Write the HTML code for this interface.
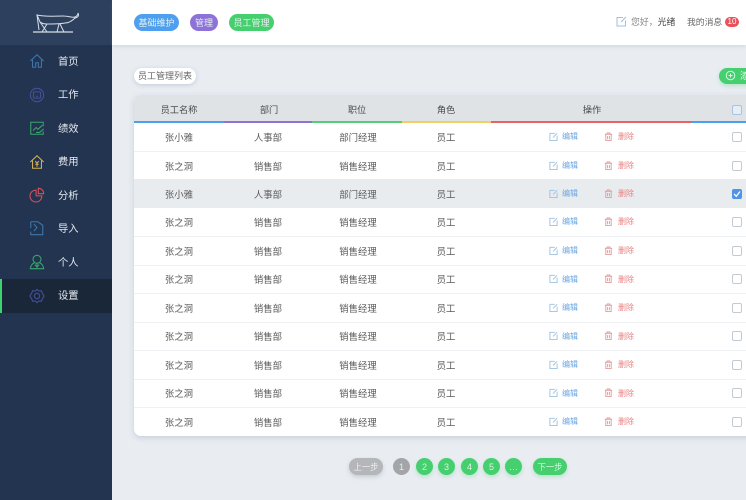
<!DOCTYPE html>
<html><head><meta charset="utf-8"><style>
*{margin:0;padding:0;box-sizing:border-box}
html,body{width:746px;height:500px;overflow:hidden}
body{position:relative;background:#e9edf2;font-family:"Liberation Sans","Noto Sans CJK SC",sans-serif;font-size:10px;color:#555;filter:blur(.3px)}
.a{position:absolute}
.t{position:absolute;white-space:nowrap;line-height:14px}
#side{left:0;top:0;width:112px;height:500px;background:#22344f}
#logo{left:0;top:0;width:112px;height:45px;background:#2d405e}
.mi{position:absolute;left:58px;color:#e6eaef;font-size:10.3px;line-height:14px;white-space:nowrap}
.ic{position:absolute;left:29px;width:16px;height:16px;fill:none;stroke-width:1.2}
#top{left:112px;top:0;width:634px;height:45px;background:#fff;box-shadow:0 1px 4px rgba(120,140,160,.25)}
.pill{position:absolute;top:14px;height:17px;border-radius:9px;color:#e8f2ee;font-size:9px;line-height:19px;text-align:center}
#tb{left:134px;top:95px;width:640px;height:341px;background:#fff;border-radius:7px;box-shadow:0 2px 6px rgba(120,140,160,.3);overflow:hidden}
#hd{left:134px;top:95px;width:612px;height:26px;background:#e0e3e6;border-radius:7px 0 0 0}
.b{position:absolute;top:121px;height:2px}
.h{position:absolute;top:102.5px;font-size:9.2px;line-height:14px;color:#4a4a4a;transform:translateX(-50%);white-space:nowrap}
.l{position:absolute;left:134px;width:612px;height:1px;background:#eef0f3}
.r{position:absolute;left:0;width:746px;height:0}
.c{position:absolute;top:-6.5px;font-size:9.4px;line-height:14px;color:#5a5a5a;transform:translateX(-50%);white-space:nowrap}
.c1{left:179px}.c2{left:268px}.c3{left:358px}.c4{left:446px}
.e{position:absolute;top:-6px;left:562px;font-size:8px;line-height:12px;color:#6aa5e0}
.d{position:absolute;top:-6px;left:618px;font-size:8px;line-height:12px;color:#e98080}
.ei,.di{position:absolute;top:-5.5px;width:9px;height:9px;fill:none;stroke-width:1}
.ei{left:549px;stroke:#9cc0e0}.di{left:604px;stroke:#e59a9a}
.cb{position:absolute;top:-5.5px;left:732px;width:10px;height:10px;border:1px solid #c2cad3;border-radius:2px;background:#fff}
.pg{position:absolute;top:458px;width:17px;height:17px;border-radius:50%;background:#45cf6e;color:#d8f5e2;font-size:9px;line-height:18px;text-align:center;box-shadow:0 2px 4px rgba(70,200,110,.3)}
</style></head><body>
<div class="a" id="side"></div>
<div class="a" id="logo"></div>
<svg class="a" style="left:30px;top:10px" width="52" height="24" fill="none" stroke="#d8dee6" stroke-width="1"><path d="M7 5C15 7 25 6 33 6C38 6 43 8 45 7C47 6 48 5 48 3C49 5 49 7 45 8C42 11 38 13 35 13C30 14 25 14 17 14C14 14 11 13 10 12Z"/><path d="M7 5L9 20M10 12L17 22M17 14L12 22M29 14L27 22M30 14L34 22"/><path d="M3 22H43" stroke-width="1.3"/></svg>
<div class="a" style="left:0;top:279px;width:112px;height:34px;background:#1a2739"></div>
<div class="a" style="left:0;top:279px;width:2px;height:34px;background:#3fd070"></div>
<svg class="ic" style="top:53px;stroke:#3d77ad" viewBox="0 0 18 18"><path d="M1.500 9L9 2L16.500 9M4 7.500V16H7.500V11H10.500V16H14V7.500"/></svg>
<svg class="ic" style="top:87px;stroke:#45509a" viewBox="0 0 18 18"><circle cx="9" cy="9" r="7.500"/><path d="M6 5.500H12Q13 5.500 13 6.500V11.500Q13 12.500 12 12.500H6Q5 12.500 5 11.500V6.500Q5 5.500 6 5.500ZM8 10.500H10"/></svg>
<svg class="ic" style="top:120px;stroke:#3aa56b" viewBox="0 0 18 18"><path d="M16 7V2.500H2V16H16V13"/><path d="M4.500 12L8 8.500L10 10.500L15 6M8 14L12 14L16.500 10"/></svg>
<svg class="ic" style="top:154px;stroke:#d4b057" viewBox="0 0 18 18"><path d="M1.500 9L9 2L16.500 9M4 7.500V16H14V7.500"/><path d="M7 8L9 10.500L11 8M9 10.500V14.500M7 11.500H11"/></svg>
<svg class="ic" style="top:187px;stroke:#d6515b" viewBox="0 0 18 18"><path d="M8 3.500A6.700 6.700 0 1 0 14.500 10H8Z"/><path d="M10.500 1.500A6 6 0 0 1 16.500 7.500H10.500Z"/></svg>
<svg class="ic" style="top:220px;stroke:#3d77ad" viewBox="0 0 18 18"><path d="M2 2H10L15.500 6V16.500H2V13"/><path d="M2 2V9M5.500 4.500L9 8.500L5.500 12.500"/></svg>
<svg class="ic" style="top:254px;stroke:#3aa56b" viewBox="0 0 18 18"><circle cx="9" cy="6" r="4.500"/><path d="M6 10C3.500 11 2 13 1.500 16.500H16.500C16 13 14.500 11 12 10M9 11V16.500M6.500 12L9 14.500L11.500 12"/></svg>
<svg class="ic" style="top:288px;stroke:#45509a" viewBox="0 0 18 18"><path d="M9 1.500L11 3.500L14 3L15 6L17 9L15 12L14 15L11 14.500L9 16.500L7 14.500L4 15L3 12L1 9L3 6L4 3L7 3.500Z"/><circle cx="9" cy="9" r="3"/></svg>
<div class="mi" style="top:55.500px">首页</div>
<div class="mi" style="top:89px">工作</div>
<div class="mi" style="top:122.500px">绩效</div>
<div class="mi" style="top:156px">费用</div>
<div class="mi" style="top:189.500px">分析</div>
<div class="mi" style="top:223px">导入</div>
<div class="mi" style="top:256.500px">个人</div>
<div class="mi" style="top:290px">设置</div>

<div class="a" id="top"></div>
<div class="pill" style="left:134px;width:45px;background:#4f9ff0">基础维护</div>
<div class="pill" style="left:190px;width:28px;background:#8d72d8">管理</div>
<div class="pill" style="left:229px;width:45px;background:#45cf6e">员工管理</div>
<svg class="a" style="left:616px;top:16px;fill:none;stroke:#9cc0e0;stroke-width:1" width="11" height="11"><path d="M7 1.500H1V10H9.500V4.500M5 6L10 1"/></svg>
<div class="t" style="left:631px;top:15px;font-size:8.900px;color:#888">您好，<span style="color:#444">光绪</span></div>
<div class="t" style="left:687px;top:15px;font-size:8.800px;color:#666">我的消息</div>
<div class="a" style="left:725px;top:17px;width:14px;height:9.500px;border-radius:5px;background:#e8525a;color:#fff;font-size:8px;line-height:10px;text-align:center">10</div>

<div class="a" style="left:134px;top:68px;width:62px;height:16px;border-radius:8px;background:#fff;box-shadow:0 1px 4px rgba(120,140,160,.35);font-size:9px;line-height:17px;text-align:center;color:#666">员工管理列表</div>
<div class="a" style="left:719px;top:68px;width:40px;height:16px;border-radius:8px;background:#45cf6e;box-shadow:0 2px 4px rgba(70,200,110,.3)"></div>
<svg class="a" style="left:725px;top:70px;fill:none;stroke:#d8f5e2;stroke-width:1" width="11" height="11"><circle cx="5.500" cy="5.500" r="4.300"/><path d="M5.500 3.500V7.500M3.500 5.500H7.500"/></svg>
<div class="t" style="left:740px;top:69px;font-size:9px;color:#e8f8ee">添</div>

<div class="a" id="tb"></div>
<div class="a" id="hd"></div>
<div class="b" style="left:134px;width:90px;background:#4f9ff0"></div>
<div class="b" style="left:224px;width:88px;background:#8d72d8"></div>
<div class="b" style="left:312px;width:90px;background:#53cf7a"></div>
<div class="b" style="left:402px;width:89px;background:#f0cf63"></div>
<div class="b" style="left:491px;width:201px;background:#e8606a"></div>
<div class="b" style="left:692px;width:54px;background:#4f9ff0"></div>
<div class="h" style="left:179px">员工名称</div>
<div class="h" style="left:269px">部门</div>
<div class="h" style="left:357px">职位</div>
<div class="h" style="left:446px">角色</div>
<div class="h" style="left:592px">操作</div>
<div class="cb" style="top:105px;background:#e6edf4;border-color:#a9c4de"></div>

<div class="a" style="left:134px;top:179px;width:612px;height:29px;background:#e9ecef"></div>
<div class="l" style="top:151px"></div><div class="l" style="top:236px"></div><div class="l" style="top:265px"></div><div class="l" style="top:293px"></div><div class="l" style="top:322px"></div><div class="l" style="top:350px"></div><div class="l" style="top:379px"></div><div class="l" style="top:407px"></div>

<div class="r" style="top:137px"><div class="c c1">张小雅</div><div class="c c2">人事部</div><div class="c c3">部门经理</div><div class="c c4">员工</div><svg class="ei" viewBox="0 0 10 10"><path d="M6.500 1.500H1V9.500H9V4M4.500 6L9 1.500"/></svg><div class="e">编辑</div><svg class="di" viewBox="0 0 10 10"><path d="M1 2.500H9M3.500 2.500V1H6.500V2.500M2 2.500V9.500H8V2.500M4 4.500V8M6 4.500V8"/></svg><div class="d">删除</div><div class="cb"></div></div>
<div class="r" style="top:166px"><div class="c c1">张之洞</div><div class="c c2">销售部</div><div class="c c3">销售经理</div><div class="c c4">员工</div><svg class="ei" viewBox="0 0 10 10"><path d="M6.500 1.500H1V9.500H9V4M4.500 6L9 1.500"/></svg><div class="e">编辑</div><svg class="di" viewBox="0 0 10 10"><path d="M1 2.500H9M3.500 2.500V1H6.500V2.500M2 2.500V9.500H8V2.500M4 4.500V8M6 4.500V8"/></svg><div class="d">删除</div><div class="cb"></div></div>
<div class="r" style="top:194px"><div class="c c1">张小雅</div><div class="c c2">人事部</div><div class="c c3">部门经理</div><div class="c c4">员工</div><svg class="ei" viewBox="0 0 10 10"><path d="M6.500 1.500H1V9.500H9V4M4.500 6L9 1.500"/></svg><div class="e">编辑</div><svg class="di" viewBox="0 0 10 10"><path d="M1 2.500H9M3.500 2.500V1H6.500V2.500M2 2.500V9.500H8V2.500M4 4.500V8M6 4.500V8"/></svg><div class="d">删除</div><div class="cb" style="background:#4f94e6;border-color:#4f94e6"></div><svg class="a" style="left:733px;top:-4.500px;fill:none;stroke:#fff;stroke-width:1.300" width="8" height="8"><path d="M1 4L3.300 6.300L7 1.500"/></svg></div>
<div class="r" style="top:222px"><div class="c c1">张之洞</div><div class="c c2">销售部</div><div class="c c3">销售经理</div><div class="c c4">员工</div><svg class="ei" viewBox="0 0 10 10"><path d="M6.500 1.500H1V9.500H9V4M4.500 6L9 1.500"/></svg><div class="e">编辑</div><svg class="di" viewBox="0 0 10 10"><path d="M1 2.500H9M3.500 2.500V1H6.500V2.500M2 2.500V9.500H8V2.500M4 4.500V8M6 4.500V8"/></svg><div class="d">删除</div><div class="cb"></div></div>
<div class="r" style="top:251px"><div class="c c1">张之洞</div><div class="c c2">销售部</div><div class="c c3">销售经理</div><div class="c c4">员工</div><svg class="ei" viewBox="0 0 10 10"><path d="M6.500 1.500H1V9.500H9V4M4.500 6L9 1.500"/></svg><div class="e">编辑</div><svg class="di" viewBox="0 0 10 10"><path d="M1 2.500H9M3.500 2.500V1H6.500V2.500M2 2.500V9.500H8V2.500M4 4.500V8M6 4.500V8"/></svg><div class="d">删除</div><div class="cb"></div></div>
<div class="r" style="top:279.500px"><div class="c c1">张之洞</div><div class="c c2">销售部</div><div class="c c3">销售经理</div><div class="c c4">员工</div><svg class="ei" viewBox="0 0 10 10"><path d="M6.500 1.500H1V9.500H9V4M4.500 6L9 1.500"/></svg><div class="e">编辑</div><svg class="di" viewBox="0 0 10 10"><path d="M1 2.500H9M3.500 2.500V1H6.500V2.500M2 2.500V9.500H8V2.500M4 4.500V8M6 4.500V8"/></svg><div class="d">删除</div><div class="cb"></div></div>
<div class="r" style="top:308px"><div class="c c1">张之洞</div><div class="c c2">销售部</div><div class="c c3">销售经理</div><div class="c c4">员工</div><svg class="ei" viewBox="0 0 10 10"><path d="M6.500 1.500H1V9.500H9V4M4.500 6L9 1.500"/></svg><div class="e">编辑</div><svg class="di" viewBox="0 0 10 10"><path d="M1 2.500H9M3.500 2.500V1H6.500V2.500M2 2.500V9.500H8V2.500M4 4.500V8M6 4.500V8"/></svg><div class="d">删除</div><div class="cb"></div></div>
<div class="r" style="top:336.500px"><div class="c c1">张之洞</div><div class="c c2">销售部</div><div class="c c3">销售经理</div><div class="c c4">员工</div><svg class="ei" viewBox="0 0 10 10"><path d="M6.500 1.500H1V9.500H9V4M4.500 6L9 1.500"/></svg><div class="e">编辑</div><svg class="di" viewBox="0 0 10 10"><path d="M1 2.500H9M3.500 2.500V1H6.500V2.500M2 2.500V9.500H8V2.500M4 4.500V8M6 4.500V8"/></svg><div class="d">删除</div><div class="cb"></div></div>
<div class="r" style="top:365px"><div class="c c1">张之洞</div><div class="c c2">销售部</div><div class="c c3">销售经理</div><div class="c c4">员工</div><svg class="ei" viewBox="0 0 10 10"><path d="M6.500 1.500H1V9.500H9V4M4.500 6L9 1.500"/></svg><div class="e">编辑</div><svg class="di" viewBox="0 0 10 10"><path d="M1 2.500H9M3.500 2.500V1H6.500V2.500M2 2.500V9.500H8V2.500M4 4.500V8M6 4.500V8"/></svg><div class="d">删除</div><div class="cb"></div></div>
<div class="r" style="top:393.500px"><div class="c c1">张之洞</div><div class="c c2">销售部</div><div class="c c3">销售经理</div><div class="c c4">员工</div><svg class="ei" viewBox="0 0 10 10"><path d="M6.500 1.500H1V9.500H9V4M4.500 6L9 1.500"/></svg><div class="e">编辑</div><svg class="di" viewBox="0 0 10 10"><path d="M1 2.500H9M3.500 2.500V1H6.500V2.500M2 2.500V9.500H8V2.500M4 4.500V8M6 4.500V8"/></svg><div class="d">删除</div><div class="cb"></div></div>
<div class="r" style="top:422px"><div class="c c1">张之洞</div><div class="c c2">销售部</div><div class="c c3">销售经理</div><div class="c c4">员工</div><svg class="ei" viewBox="0 0 10 10"><path d="M6.500 1.500H1V9.500H9V4M4.500 6L9 1.500"/></svg><div class="e">编辑</div><svg class="di" viewBox="0 0 10 10"><path d="M1 2.500H9M3.500 2.500V1H6.500V2.500M2 2.500V9.500H8V2.500M4 4.500V8M6 4.500V8"/></svg><div class="d">删除</div><div class="cb"></div></div>

<div class="a" style="left:349px;top:458px;width:34px;height:17px;border-radius:9px;background:#b4b6b9;color:#eee;font-size:8.300px;line-height:18px;text-align:center;box-shadow:0 2px 4px rgba(120,130,150,.3)">上一步</div>
<div class="pg" style="left:393px;background:#a3a5a9;box-shadow:none">1</div>
<div class="pg" style="left:416px">2</div>
<div class="pg" style="left:438px">3</div>
<div class="pg" style="left:461px">4</div>
<div class="pg" style="left:483px">5</div>
<div class="pg" style="left:505px">…</div>
<div class="a" style="left:533px;top:458px;width:34px;height:17px;border-radius:9px;background:#45cf6e;color:#e0f7e8;font-size:8.300px;line-height:18px;text-align:center;box-shadow:0 2px 4px rgba(70,200,110,.3)">下一步</div>
</body></html>
